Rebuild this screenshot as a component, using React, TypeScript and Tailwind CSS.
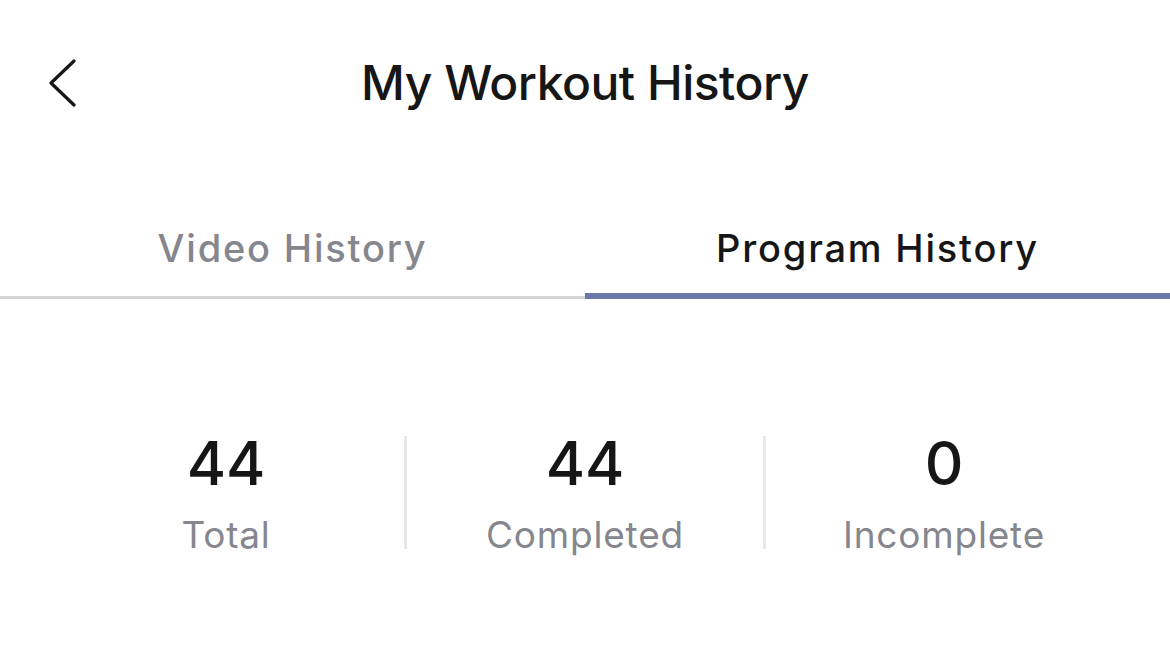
import React from 'react';

interface Stat {
  value: number;
  label: string;
}

const stats: Stat[] = [
  { value: 44, label: 'Total' },
  { value: 44, label: 'Completed' },
  { value: 0, label: 'Incomplete' },
];

const BackChevron = () => (
  <svg width="28" height="48" viewBox="0 0 28 48" fill="none">
    <polyline
      points="26,2 3,24 26,46"
      stroke="#161616"
      strokeWidth="3.2"
      strokeLinecap="round"
      strokeLinejoin="round"
    />
  </svg>
);

export default function App() {
  return (
    <div className="w-[1170px] h-[657px] bg-white font-['Inter',sans-serif] text-[#161616] overflow-hidden">
      {/* header */}
      <div className="h-[166px] grid grid-cols-[200px_1fr_200px] items-center">
        <button className="pl-[48px] flex items-center">
          <BackChevron />
        </button>
        <h1 className="text-center text-[48px] leading-[56px] font-medium tracking-[-0.5px]">My Workout History</h1>
        <div />
      </div>

      {/* tabs */}
      <div className="flex h-[133px]">
        <button className="flex-1 flex items-end justify-center pb-[26px] border-b-[3px] border-[#d4d4d6]">
          <span className="text-[38px] leading-[44px] font-medium tracking-[1.8px] text-[#86868e]">Video History</span>
        </button>
        <button className="flex-1 flex items-end justify-center pb-[23px] border-b-[6px] border-[#6d78a8]">
          <span className="text-[38px] leading-[44px] font-medium tracking-[1.8px] text-[#161616]">Program History</span>
        </button>
      </div>

      {/* stats */}
      <div className="mt-[128px] px-[48px] flex items-center">
        {stats.map((s, i) => (
          <React.Fragment key={s.label}>
            {i > 0 && <div className="w-[3px] h-[113px] bg-[#e8e8ea]" />}
            <div className="flex-1 flex flex-col items-center">
              <span className="text-[60px] leading-[72px] font-medium">{s.value}</span>
              <span className="mt-[13px] text-[37px] leading-[46px] tracking-[0.8px] text-[#86868e]">{s.label}</span>
            </div>
          </React.Fragment>
        ))}
      </div>
    </div>
  );
}
